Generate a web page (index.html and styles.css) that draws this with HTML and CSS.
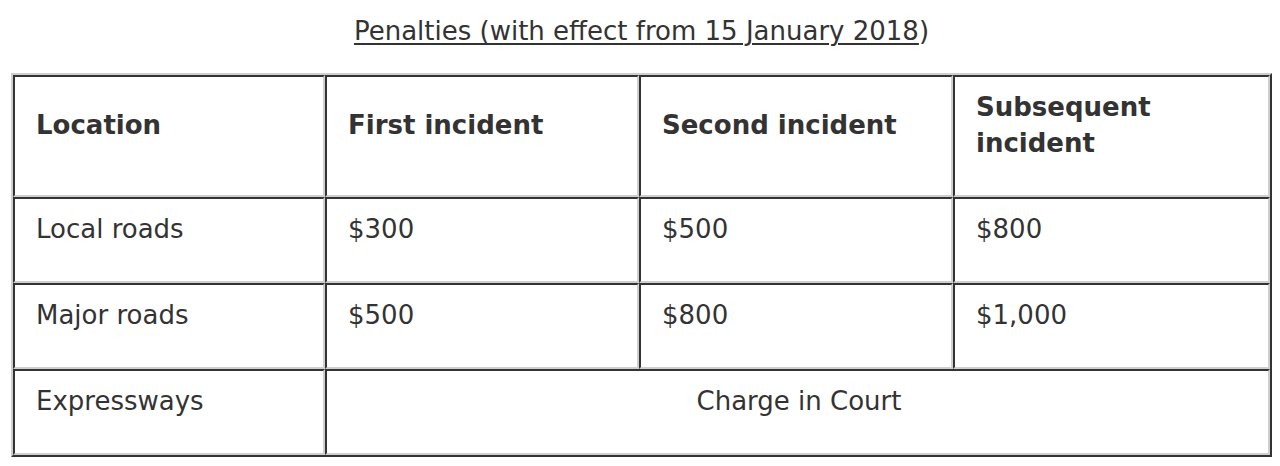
FILE: index.html
```html
<!DOCTYPE html>
<html lang="en">
<head>
<meta charset="utf-8">
<title>Penalties</title>
<link rel="stylesheet" href="styles.css">
</head>
<body>
<div class="page">
  <p class="title"><u>Penalties (with effect from 15 January 2018</u>)</p>
  <table class="penalties">
    <colgroup><col class="c1"><col class="c2"><col class="c3"><col class="c4"></colgroup>
    <thead>
      <tr>
        <th>Location</th>
        <th>First incident</th>
        <th>Second incident</th>
        <th>Subsequent incident</th>
      </tr>
    </thead>
    <tbody>
      <tr>
        <td>Local roads</td>
        <td>$300</td>
        <td>$500</td>
        <td>$800</td>
      </tr>
      <tr>
        <td>Major roads</td>
        <td>$500</td>
        <td>$800</td>
        <td>$1,000</td>
      </tr>
      <tr>
        <td>Expressways</td>
        <td colspan="3" class="center">Charge in Court</td>
      </tr>
    </tbody>
  </table>
</div>
</body>
</html>
```

FILE: styles.css
```css
html, body {
  margin: 0;
  padding: 0;
  background: #fff;
}

body {
  font-family: "DejaVu Sans", Verdana, sans-serif;
  font-size: 26px;
  line-height: 36px;
  color: #333;
}

.page {
  padding: 13px 8px 0 11px;
}

.title {
  margin: 0 0 24px;
  text-align: center;
}

.title u {
  text-decoration: underline;
  text-decoration-thickness: 2px;
  text-underline-offset: 3px;
}

.penalties {
  width: 100%;
  table-layout: fixed;
  border-collapse: separate;
  border-spacing: 0;
  border: 2px solid;
  border-color: #cfcfcf #333 #333 #cfcfcf;
}

.penalties .c1 { width: 312px; }
.penalties .c2 { width: 314px; }
.penalties .c3 { width: 314px; }
.penalties .c4 { width: 317px; }

.penalties th,
.penalties td {
  border: 2px solid;
  border-color: #333 #cfcfcf #cfcfcf #333;
  padding: 12px 18px 34px 21px;
  text-align: left;
  vertical-align: middle;
}

.penalties th {
  font-weight: bold;
}

.penalties td.center {
  text-align: center;
}
```
